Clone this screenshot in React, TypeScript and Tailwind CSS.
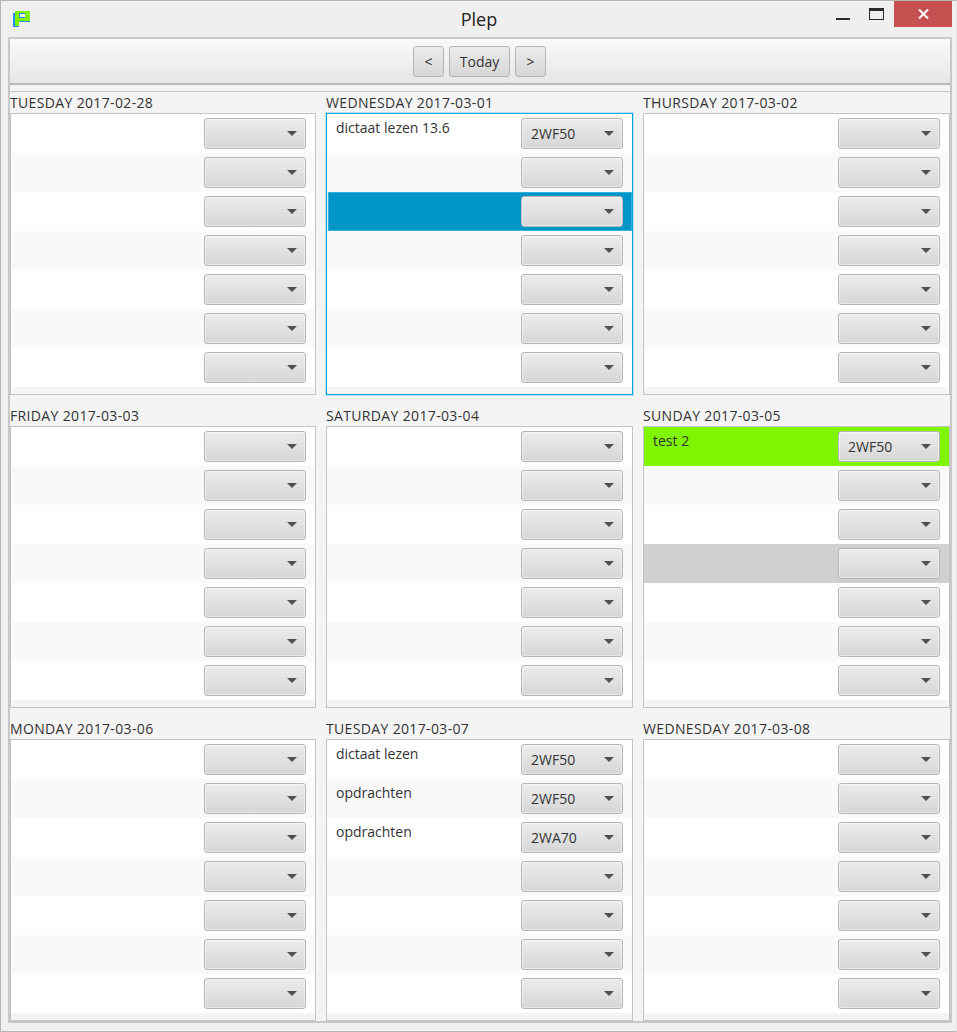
const days = [
  { label: "TUESDAY 2017-02-28", rows: {} },
  { label: "WEDNESDAY 2017-03-01", rows: { 0: ["dictaat lezen 13.6", "2WF50"] }, focused: true },
  { label: "THURSDAY 2017-03-02", rows: {} },
  { label: "FRIDAY 2017-03-03", rows: {} },
  { label: "SATURDAY 2017-03-04", rows: {} },
  { label: "SUNDAY 2017-03-05", rows: { 0: ["test 2", "2WF50"] }, colored: true },
  { label: "MONDAY 2017-03-06", rows: {} },
  {
    label: "TUESDAY 2017-03-07",
    rows: {
      0: ["dictaat lezen", "2WF50"],
      1: ["opdrachten", "2WF50"],
      2: ["opdrachten", "2WA70"],
    },
  },
  { label: "WEDNESDAY 2017-03-08", rows: {} },
] as {
  label: string;
  rows: Record<number, [string, string]>;
  focused?: boolean;
  colored?: boolean;
}[];

function Combo({ value }: { value?: string }) {
  return (
    <div className="flex h-[31px] w-[102px] items-center rounded-[3px] border border-[#b5b5b5] bg-gradient-to-b from-[#ececec] to-[#d6d6d6] pl-[9px] pr-[8px] shadow-[inset_0_0_0_1px_rgba(255,255,255,0.45)]">
      <span className="flex-1 text-[14px] text-[#333333]">{value}</span>
      <span className="h-0 w-0 border-x-[5px] border-t-[5px] border-x-transparent border-t-[#505050]" />
    </div>
  );
}

function Row({ index, day }: { index: number; day: (typeof days)[number] }) {
  const cell = day.rows[index];
  let bg = index % 2 === 0 ? "bg-white" : "bg-[#f9f9f9]";
  if (day.focused && index === 2) {
    bg = "bg-[#0096c9] shadow-[inset_1px_0_0_#d5f0fa,inset_2px_0_0_#33b0dc,inset_0_0_0_1px_#33b0dc]";
  }
  if (day.colored && index === 0) bg = "bg-[#80f500]";
  if (day.colored && index === 3) bg = "bg-[#d0d0d0]";
  return (
    <div className={`flex h-[39px] items-start justify-between py-[4px] pl-[9px] pr-[9px] ${bg}`}>
      <span className="text-[14px] leading-[19px] text-[#333333]">{cell?.[0]}</span>
      <Combo value={cell?.[1]} />
    </div>
  );
}

function DayCell({ day }: { day: (typeof days)[number] }) {
  return (
    <div className="flex flex-col">
      <div className="h-[21px] whitespace-nowrap text-[14px] leading-[22px] tracking-[0.35px] text-[#333333]">{day.label}</div>
      <div
        className={`h-[282px] border ${
          day.focused ? "border-[#00a5e0] shadow-[0_0_0_1px_#b5e4f7]" : "border-[#c4c4c4]"
        }`}
      >
        {[0, 1, 2, 3, 4, 5, 6].map((i) => (
          <Row key={i} index={i} day={day} />
        ))}
      </div>
    </div>
  );
}

function ToolButton({ children, wide }: { children: string; wide?: boolean }) {
  return (
    <div
      className={`flex h-[31px] items-center justify-center rounded-[3px] border border-[#b5b5b5] bg-gradient-to-b from-[#ececec] to-[#d6d6d6] text-[14px] text-[#333333] ${
        wide ? "w-[61px]" : "w-[31px]"
      }`}
    >
      {children}
    </div>
  );
}

export default function App() {
  return (
    <div
      className="flex h-[1032px] w-[957px] flex-col overflow-hidden border-x border-y border-b-[#b5b5b5] border-l-[#b5b5b5] border-r-[#e4e4e4] border-t-[#b5b5b5] bg-[#efefef]"
      style={{ fontFamily: '"Open Sans", "Noto Sans", sans-serif' }}
    >
      {/* Title bar */}
      <div className="grid h-[36px] shrink-0 grid-cols-[1fr_auto_1fr] items-start">
        <div className="pl-[12px] pt-[10px]">
          <svg width="17" height="16" viewBox="0 0 17 16" className="block">
            <path d="M0 2h2v-1h15v10H6v5H0z" fill="#1e90ff" />
            <path d="M2 0h15v10H6v5H2z" fill="#7ff000" />
            <path d="M6 2h6v5H6z" fill="#1e90ff" />
            <path d="M7 3h5v3H7z" fill="#f4f8f4" />
            <path d="M6 10h11v1H6z" fill="#1e90ff" />
          </svg>
        </div>
        <div className="pl-[1px] pt-[5px] text-[18px] leading-[26px] text-[#222222]">Plep</div>
        <div className="flex items-start justify-end pr-[4px]">
          <div className="mr-[19px] mt-[17px] h-[2px] w-[14px] bg-[#2a2a2a]" />
          <div className="mr-[10px] mt-[7px] h-[12px] w-[15px] border border-t-[3px] border-[#2a2a2a]" />
          <div className="flex h-[26px] w-[58px] items-center justify-center bg-[#c75050]">
            <svg width="11" height="10" viewBox="0 0 11 10">
              <path d="M1 .5 10 9.5M10 .5 1 9.5" stroke="#ffffff" strokeWidth="2" fill="none" />
            </svg>
          </div>
        </div>
      </div>

      {/* Content frame */}
      <div className="ml-[7px] mr-[4px] flex h-[986px] flex-col overflow-hidden border-2 border-[#c8c8c8] bg-[#f4f4f4]">
        <div className="flex h-[46px] shrink-0 items-center justify-center gap-[5px] border-b-2 border-[#b9b9b9] bg-gradient-to-b from-[#f9f9f9] to-[#e6e6e6] pr-[1px]">
          <ToolButton>{"<"}</ToolButton>
          <ToolButton wide>Today</ToolButton>
          <ToolButton>{">"}</ToolButton>
        </div>
        <div className="h-[7px] shrink-0 border-b border-[#c8c8c8] bg-[#f4f4f4]" />
        <div className="grid grid-cols-[306px_307px_307px] gap-x-[10px] gap-y-[10px]">
          {days.map((d) => (
            <DayCell key={d.label} day={d} />
          ))}
        </div>
      </div>
    </div>
  );
}
